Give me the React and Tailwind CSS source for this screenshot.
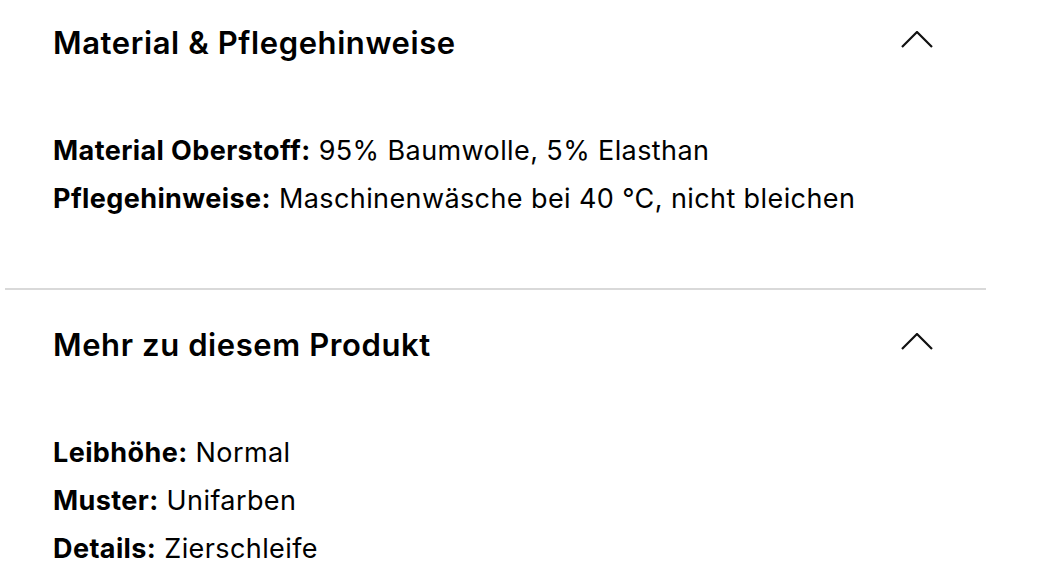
import React from 'react';

const sections = [
  {
    title: 'Material & Pflegehinweise',
    rows: [
      { label: 'Material Oberstoff:', value: '95% Baumwolle, 5% Elasthan' },
      { label: 'Pflegehinweise:', value: 'Maschinenwäsche bei 40 °C, nicht bleichen' },
    ],
  },
  {
    title: 'Mehr zu diesem Produkt',
    rows: [
      { label: 'Leibhöhe:', value: 'Normal' },
      { label: 'Muster:', value: 'Unifarben' },
      { label: 'Details:', value: 'Zierschleife' },
    ],
  },
];

const Chevron = () => (
  <svg width="32" height="17" viewBox="0 0 32 17" fill="none" stroke="#111" strokeWidth="2.2" className="mb-[7px]">
    <path d="M1 16 L16 1 L31 16" />
  </svg>
);

const App = () => {
  return (
    <div className="w-[1050px] h-[584px] overflow-hidden bg-white text-black" style={{ fontFamily: 'Inter, "Noto Sans", sans-serif' }}>
      <div className="w-[981px] ml-[5px] -mt-[12px]">
        {sections.map((s, i) => (
          <div key={i} className={i > 0 ? 'border-t-2 border-[#d9d9d9]' : ''}>
            <div className="flex items-center justify-between pl-[48px] pr-[53px] h-[110px]">
              <h3 className="text-[31px] font-semibold tracking-[0.6px]">{s.title}</h3>
              <Chevron />
            </div>
            <div className="pl-[48px] pt-[36px] pb-[72px] flex flex-col gap-[14px]">
              {s.rows.map((r, j) => (
                <p key={j} className="text-[27px] leading-[34px] tracking-[0.4px]">
                  <span className="font-bold">{r.label}</span> {r.value}
                </p>
              ))}
            </div>
          </div>
        ))}
      </div>
    </div>
  );
};

export default App;
